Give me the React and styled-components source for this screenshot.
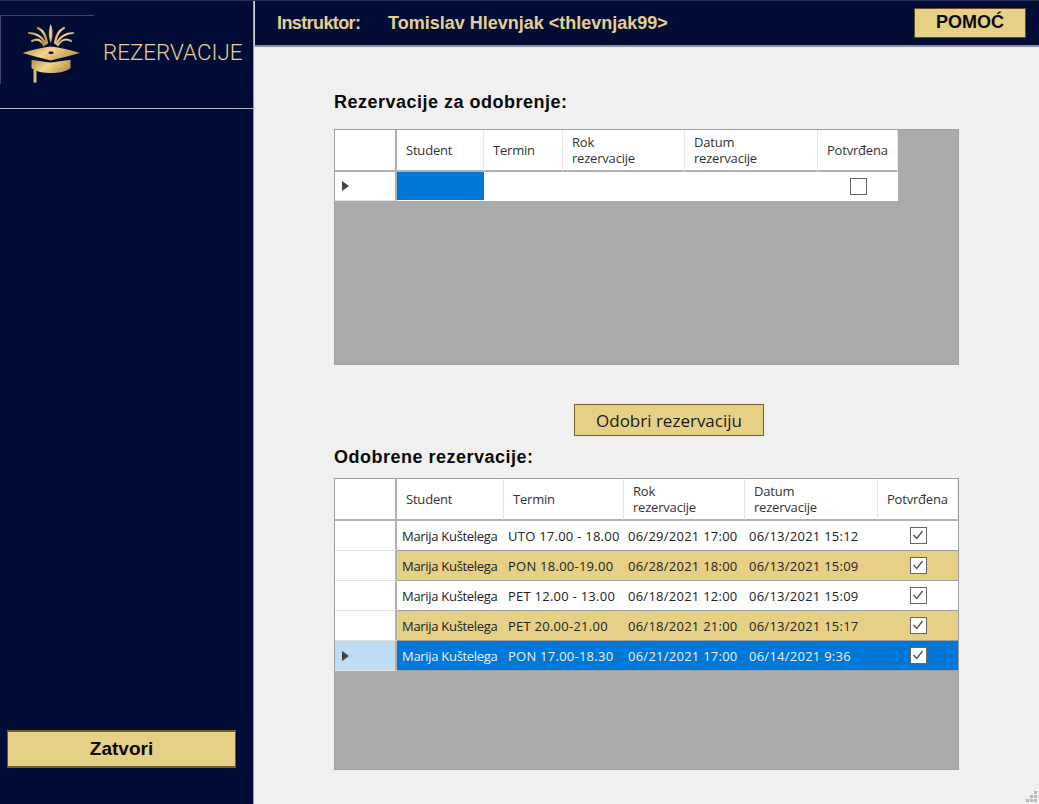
import styled, { createGlobalStyle } from "styled-components";

const GlobalStyle = createGlobalStyle`
  html, body {
    margin: 0;
    padding: 0;
    background: #f0f0f0;
  }
  * {
    box-sizing: border-box;
  }
`;

const navy = "#020c34";
const gold = "#e6d085";
const goldText = "#e3cf92";
const gridLine = "#a0a0a0";
const select = "#0078d7";

const Window = styled.div`
  position: relative;
  display: flex;
  width: 1039px;
  height: 804px;
  overflow: hidden;
  background: #f0f0f0;
  font-family: "Liberation Sans", Arial, sans-serif;
`;

const Sidebar = styled.aside`
  display: flex;
  flex-direction: column;
  width: 254px;
  height: 100%;
  padding-bottom: 36px;
  background: ${navy};
  border-right: 1px solid #9a9daa;
`;

const LogoPanel = styled.div`
  position: relative;
  display: flex;
  align-items: center;
  gap: 19px;
  width: 255px;
  height: 109px;
  padding: 0 0 5px 20px;
  border-top: 1px solid #252d52;
  border-bottom: 1px solid #b4b6c2;

  &::before {
    content: "";
    position: absolute;
    left: 0;
    top: 14px;
    width: 93px;
    height: 68px;
    border-top: 1px solid #3e4566;
    border-left: 1px solid #3e4566;
  }
`;

const LogoTitle = styled.div`
  font-family: Roboto, sans-serif;
  font-size: 22.4px;
  font-weight: 300;
  color: ${goldText};
  white-space: nowrap;
`;

const CloseButton = styled.button`
  width: 229px;
  height: 38px;
  margin: auto 0 0 7px;
  background: ${gold};
  border: 1px solid #6f5c2a;
  border-width: 2px 1px 2px 1px;
  font-family: inherit;
  font-size: 19px;
  font-weight: 700;
  color: #0a0a0a;
`;

const Main = styled.main`
  display: flex;
  flex-direction: column;
  flex: 1;
`;

const TopBar = styled.header`
  display: flex;
  align-items: center;
  height: 47px;
  padding: 0 13px 0 22px;
  background: ${navy};
  border-top: 1px solid #252d52;
  border-left: 1px solid #d0d2da;
  border-bottom: 2px solid #8d91a3;
  font-size: 18px;
  font-weight: 700;
  color: ${goldText};
  white-space: nowrap;
`;

const Instructor = styled.span`
  width: 111px;
  letter-spacing: -0.6px;
`;

const HelpButton = styled.button`
  width: 112px;
  height: 30px;
  margin-left: auto;
  margin-bottom: 1px;
  background: ${gold};
  border: 1px solid #5f4f22;
  font-family: inherit;
  font-size: 18px;
  font-weight: 700;
  color: #0a0a0a;
`;

const Content = styled.div`
  display: flex;
  flex-direction: column;
  width: 625px;
  margin-left: 80px;
  padding-top: 46px;
`;

const SectionTitle = styled.h2`
  margin: 0 0 ${(p) => p.$gap}px;
  font-size: 18px;
  line-height: 18px;
  font-weight: 700;
  color: #0a0a0a;
  letter-spacing: 0.5px;
`;

const ApproveButton = styled.button`
  align-self: flex-start;
  width: 190px;
  height: 32px;
  margin: 39px 0 12px 240px;
  background: ${gold};
  border: 1px solid #6f5c2a;
  font-family: "Open Sans", sans-serif;
  font-size: 17px;
  color: #1a1a1a;
`;

const Grid = styled.div`
  height: ${(p) => p.$height}px;
  background: #ababab;
  border: 1px solid ${gridLine};
  font-family: "Open Sans", sans-serif;
  font-size: 13px;
`;

const Row = styled.div`
  display: grid;
  grid-template-columns: ${(p) => p.$columns.map((c) => `${c}px`).join(" ")};
  height: ${(p) => p.$height}px;
  width: max-content;
`;

const HeadCell = styled.div`
  display: flex;
  align-items: center;
  padding-left: ${(p) => p.$pad}px;
  background: #fff;
  border-right: ${(p) => (p.$corner ? "2px solid #b0b0b0" : "1px solid #e8e8e8")};
  border-bottom: 2px solid #b0b0b0;
  line-height: 16px;
  letter-spacing: -0.2px;
  color: #333;
`;

const RowHead = styled.div`
  display: flex;
  align-items: center;
  padding-left: 7px;
  background: ${(p) => (p.$selected ? "#bedcf4" : "#fff")};
  border-right: 2px solid #b0b0b0;
  border-bottom: 1px solid #e3e3e3;
`;

const Cell = styled.div`
  display: flex;
  align-items: center;
  justify-content: ${(p) => (p.$center ? "center" : "flex-start")};
  padding-left: ${(p) => (p.$center ? 0 : p.$pad)}px;
  background: ${(p) => (p.$selected ? select : p.$odd ? gold : "#fff")};
  border-bottom: 1px solid ${(p) => (p.$plain ? "#fff" : gridLine)};
  color: ${(p) => (p.$selected ? "#e8f2fb" : "#222")};
  letter-spacing: ${(p) => (p.$tight ? "-0.3px" : "0.25px")};
  white-space: nowrap;
`;

const Pointer = styled.span`
  width: 0;
  height: 0;
  border-left: 7px solid #444;
  border-top: 5px solid transparent;
  border-bottom: 5px solid transparent;
`;

const CheckBox = styled.span`
  display: flex;
  width: 17px;
  height: 17px;
  background: #fff;
  border: 1.5px solid #666;
`;

const Grip = styled.svg`
  position: absolute;
  right: 1px;
  bottom: 1px;
`;

function CapLogo() {
  return (
    <svg width="64" height="64" viewBox="20 20 64 64">
      <defs>
        <linearGradient id="gold" x1="0" y1="0" x2="1" y2="0.4">
          <stop offset="0" stopColor="#b88f45" />
          <stop offset="0.5" stopColor="#f0d68e" />
          <stop offset="1" stopColor="#c49c52" />
        </linearGradient>
      </defs>
      <path d="M50.7 24 C48 30 48.5 37 50.7 43 C53 37 53.5 30 50.7 24 Z" fill="url(#gold)" />
      <g fill="none" stroke="url(#gold)" strokeWidth="2.2" strokeLinecap="round">
        <path d="M38 28 C42 30 46 35 47 43" />
        <path d="M29 33 C36 33 43 37 45.5 44" />
        <path d="M32 41 C37 38 41 40 44 45" />
        <path d="M64 28 C60 30 56 35 55 43" />
        <path d="M73 33 C66 33 59 37 56.5 44" />
        <path d="M71 41 C66 38 61 40 58 45" />
      </g>
      <path d="M22.5 53 C32 50 42 47.5 50.7 46.5 C60 47.5 70 50 80 53 C70 56 60 58 50.5 60.5 C42 58 32 56 22.5 53 Z" fill="url(#gold)" />
      <ellipse cx="51" cy="52.8" rx="2.6" ry="1.2" fill={navy} />
      <path d="M31.5 60 C38 60.5 45 62 50.5 62.5 C56 62 64 60.5 70.5 60 L70.5 68 C66 72 58 73 51 73 C44 73 36 72 31.5 68 Z" fill="url(#gold)" />
      <rect x="33.5" y="70" width="3" height="12.5" fill="#d9bd78" />
    </svg>
  );
}

function Check({ checked }) {
  return (
    <CheckBox>
      {checked && (
        <svg width="14" height="14" viewBox="0 0 14 14">
          <path d="M2.5 7 L5.8 10.5 L11.5 3" fill="none" stroke="#555" strokeWidth="1.4" />
        </svg>
      )}
    </CheckBox>
  );
}

const heads = [
  ["Student"],
  ["Termin"],
  ["Rok", "rezervacije"],
  ["Datum", "rezervacije"],
  ["Potvrđena"],
];

const approved = [
  ["Marija Kuštelega", "UTO 17.00 - 18.00", "06/29/2021 17:00", "06/13/2021 15:12"],
  ["Marija Kuštelega", "PON 18.00-19.00", "06/28/2021 18:00", "06/13/2021 15:09"],
  ["Marija Kuštelega", "PET 12.00 - 13.00", "06/18/2021 12:00", "06/13/2021 15:09"],
  ["Marija Kuštelega", "PET 20.00-21.00", "06/18/2021 21:00", "06/13/2021 15:17"],
  ["Marija Kuštelega", "PON 17.00-18.30", "06/21/2021 17:00", "06/14/2021 9:36"],
];

function HeadRow({ columns }) {
  return (
    <Row $columns={columns} $height={42}>
      <HeadCell $corner />
      {heads.map((lines) => (
        <HeadCell key={lines[0]} $pad={9}>
          <div>
            {lines.map((line) => (
              <div key={line}>{line}</div>
            ))}
          </div>
        </HeadCell>
      ))}
    </Row>
  );
}

const pendingColumns = [62, 87, 79, 122, 133, 80];
const approvedColumns = [62, 107, 120, 121, 133, 80];

export default function App() {
  return (
    <Window>
      <GlobalStyle />
      <Sidebar>
        <LogoPanel>
          <CapLogo />
          <LogoTitle>REZERVACIJE</LogoTitle>
        </LogoPanel>
        <CloseButton>Zatvori</CloseButton>
      </Sidebar>
      <Main>
        <TopBar>
          <Instructor>Instruktor:</Instructor>
          <span>Tomislav Hlevnjak &lt;thlevnjak99&gt;</span>
          <HelpButton>POMOĆ</HelpButton>
        </TopBar>
        <Content>
          <SectionTitle $gap={18}>Rezervacije za odobrenje:</SectionTitle>
          <Grid $height={236}>
            <HeadRow columns={pendingColumns} />
            <Row $columns={pendingColumns} $height={29}>
              <RowHead><Pointer /></RowHead>
              <Cell $selected $plain />
              <Cell $plain />
              <Cell $plain />
              <Cell $plain />
              <Cell $center $plain><Check /></Cell>
            </Row>
          </Grid>
          <ApproveButton>Odobri rezervaciju</ApproveButton>
          <SectionTitle $gap={12}>Odobrene rezervacije:</SectionTitle>
          <Grid $height={292}>
            <HeadRow columns={approvedColumns} />
            {approved.map((row, i) => {
              const selected = i === approved.length - 1;
              return (
                <Row key={row[1]} $columns={approvedColumns} $height={30}>
                  <RowHead $selected={selected}>{selected && <Pointer />}</RowHead>
                  {row.map((value, j) => (
                    <Cell key={j} $pad={j === 0 ? 5 : 4} $tight={j === 0} $odd={i % 2 === 1} $selected={selected}>
                      {value}
                    </Cell>
                  ))}
                  <Cell $center $odd={i % 2 === 1} $selected={selected}><Check checked /></Cell>
                </Row>
              );
            })}
          </Grid>
        </Content>
      </Main>
      <Grip width="12" height="12" viewBox="0 0 12 12" fill="#b8b8b8">
        <rect x="8" y="0" width="3" height="3" />
        <rect x="4" y="4" width="3" height="3" />
        <rect x="8" y="4" width="3" height="3" />
        <rect x="0" y="8" width="3" height="3" />
        <rect x="4" y="8" width="3" height="3" />
        <rect x="8" y="8" width="3" height="3" />
      </Grip>
    </Window>
  );
}
